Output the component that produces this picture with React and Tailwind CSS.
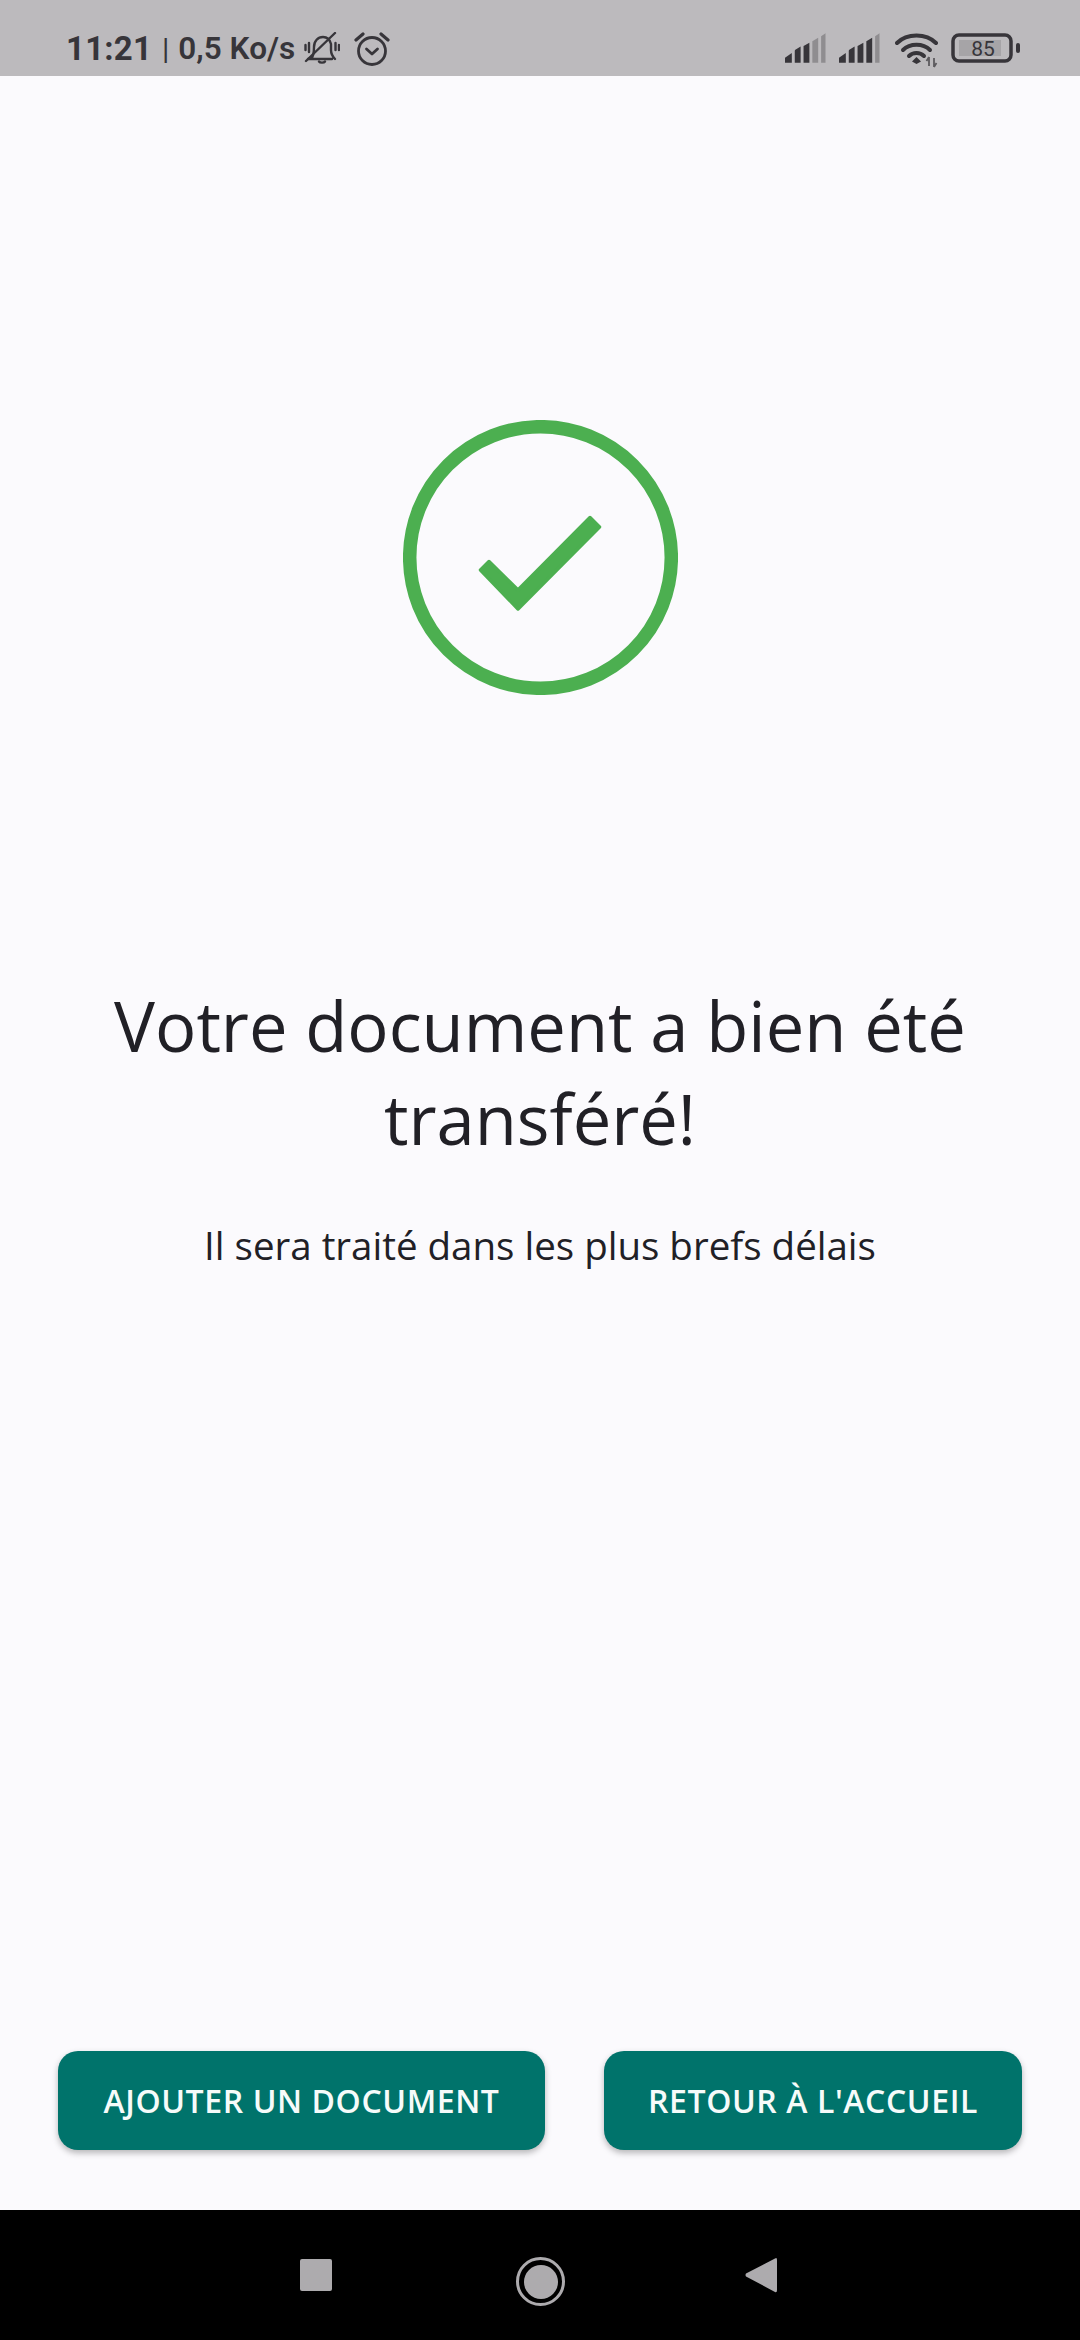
import React from "react";

const Signal = ({ full }) => (
  <svg width="41" height="30" viewBox="0 0 42 30" className="shrink-0">
    <path d="M0 30V25L7 20V30Z" fill="#37353a" />
    <path d="M10 30V18Q10 17 11 16.500L16 13.500V30Z" fill="#37353a" />
    <path d="M19 30V13L25 9.500V30Z" fill="#37353a" />
    <path d="M28 30V8L34 4.500V30Z" fill={full ? "#37353a" : "#8f8d90"} />
    <path d="M37 30V3L41.500 0V30Z" fill="#8f8d90" />
  </svg>
);

export default function App() {
  return (
    <div className="flex h-[2340px] w-[1080px] flex-col bg-[#fbfafd] font-['Open_Sans',sans-serif]">
      <div className="flex h-[76px] shrink-0 items-start bg-[#bcbabd] pt-[32px] text-[#37353a]">
        <div className="ml-[66px] mt-[1px] flex w-[238px] shrink-0 items-center font-['Roboto',sans-serif] text-[33px] leading-[32px] font-bold">
          <span className="tracking-[0.2px]">11:21</span>
          <span className="ml-[10px] text-[30px] font-normal">|</span>
          <span className="ml-[9px] text-[31.500px] font-semibold whitespace-nowrap">0,5 Ko/s</span>
        </div>
        <svg width="36" height="32" viewBox="0 0 36 32" fill="none" stroke="#37353a" strokeWidth="2.400" className="shrink-0" strokeLinecap="round" strokeLinejoin="round">
          <path d="M4 27H28M7 27C10 24 10 20 10 15C10 9 14 5 19 5C23 5 26 8 27 12V18C27 22 29 25 31 27" />
          <path d="M15 29.500C16 31 20 31 21 29.500" />
          <path d="M2 29L31 1" />
          <path d="M5 11V20M1.500 13V18M31.500 11V18M35 13V18" />
        </svg>
        <svg width="36" height="34" viewBox="0 0 36 34" fill="none" stroke="#37353a" strokeWidth="2.800" className="ml-[14px] shrink-0" strokeLinecap="round" strokeLinejoin="round">
          <circle cx="18" cy="19" r="13.500" />
          <path d="M12.500 17L18 22L23.500 17" />
          <path d="M2 8L9 2M34 8L27 2" strokeWidth="3.200" />
        </svg>
        <div className="ml-auto mr-[59px] flex items-start">
          <div className="mt-[1px] flex gap-[13px]">
            <Signal />
            <Signal full />
          </div>
          <svg width="46" height="36" viewBox="0 0 46 36" fill="none" className="ml-[15px] shrink-0">
            <path d="M2 11C12 1 31 1 41 11" stroke="#37353a" strokeWidth="4" strokeLinecap="round" />
            <path d="M8 18C15 11 28 11 35 18" stroke="#37353a" strokeWidth="4" strokeLinecap="round" />
            <path d="M14 24C18 20 25 20 29 24" stroke="#37353a" strokeWidth="4" strokeLinecap="round" />
            <path d="M21.500 25L26 29.500L21.500 32L17 29.500Z" fill="#37353a" />
            <path d="M34 25V34M31.500 29L34 25M39 26V35M39 35L41.500 31" stroke="#5c5a5e" strokeWidth="1.800" />
          </svg>
          <svg width="70" height="30" viewBox="0 0 70 30" className="ml-[10px] mt-[1px] shrink-0">
            <rect x="2" y="2" width="58" height="26" rx="6" fill="none" stroke="#37353a" strokeWidth="3.500" />
            <rect x="8" y="7" width="42" height="16" fill="#a6a4a7" />
            <rect x="65" y="10" width="4" height="10" rx="2" fill="#37353a" />
            <text x="32" y="22.500" textAnchor="middle" fontFamily="Roboto, sans-serif" fontSize="21" fill="#37353a">85</text>
          </svg>
        </div>
      </div>

      <main className="flex min-h-0 flex-1 flex-col items-center">
        <svg width="275" height="275" viewBox="0 0 275 275" fill="none" className="mt-[344px] shrink-0">
          <circle cx="137.500" cy="137.500" r="130.800" stroke="#4caf50" strokeWidth="13.500" />
          <path d="M77.500 150L86 141.500L115 170L187 97.500L196.500 107L115 189Z" fill="#4caf50" stroke="#4caf50" strokeWidth="3.500" strokeLinejoin="round" />
        </svg>
        <h1 className="mt-[284px] w-[900px] text-center text-[68.700px] leading-[93px] font-normal text-[#212026]">
          Votre document a bien été transféré!
        </h1>
        <p className="mt-[55px] text-center text-[38.500px] leading-[50px] text-[#212026]">
          Il sera traité dans les plus brefs délais
        </p>
        <div className="mt-auto mb-[60px] flex w-full gap-[59px] pl-[58px]">
          <button className="flex h-[99px] w-[487px] items-center justify-center rounded-[20px] bg-[#00736b] pt-[1px] text-[32px] font-semibold tracking-[0.6px] text-[#f6fbfa] shadow-[0_3px_6px_rgba(0,0,0,0.28)]">
            AJOUTER UN DOCUMENT
          </button>
          <button className="flex h-[99px] w-[418px] items-center justify-center rounded-[20px] bg-[#00736b] pt-[1px] text-[32px] font-semibold tracking-[0.6px] text-[#f6fbfa] shadow-[0_3px_6px_rgba(0,0,0,0.28)]">
            RETOUR À L'ACCUEIL
          </button>
        </div>
      </main>

      <nav className="flex h-[130px] shrink-0 items-start bg-black pl-[300px] pt-[47px]">
        <div className="mt-[2px] h-[32px] w-[32px] rounded-[2px] bg-[#adabae]" />
        <div className="ml-[184px] flex h-[49px] w-[49px] items-center justify-center rounded-full border-[3px] border-[#adabae]">
          <div className="h-[34px] w-[34px] rounded-full bg-[#adabae]" />
        </div>
        <svg width="32" height="36" viewBox="0 0 32 36" className="ml-[180px] shrink-0">
          <path d="M30 1.500Q32 0 32 3V33Q32 36 30 35L1 19.500Q0 18 1 16.500Z" fill="#adabae" />
        </svg>
      </nav>
    </div>
  );
}
